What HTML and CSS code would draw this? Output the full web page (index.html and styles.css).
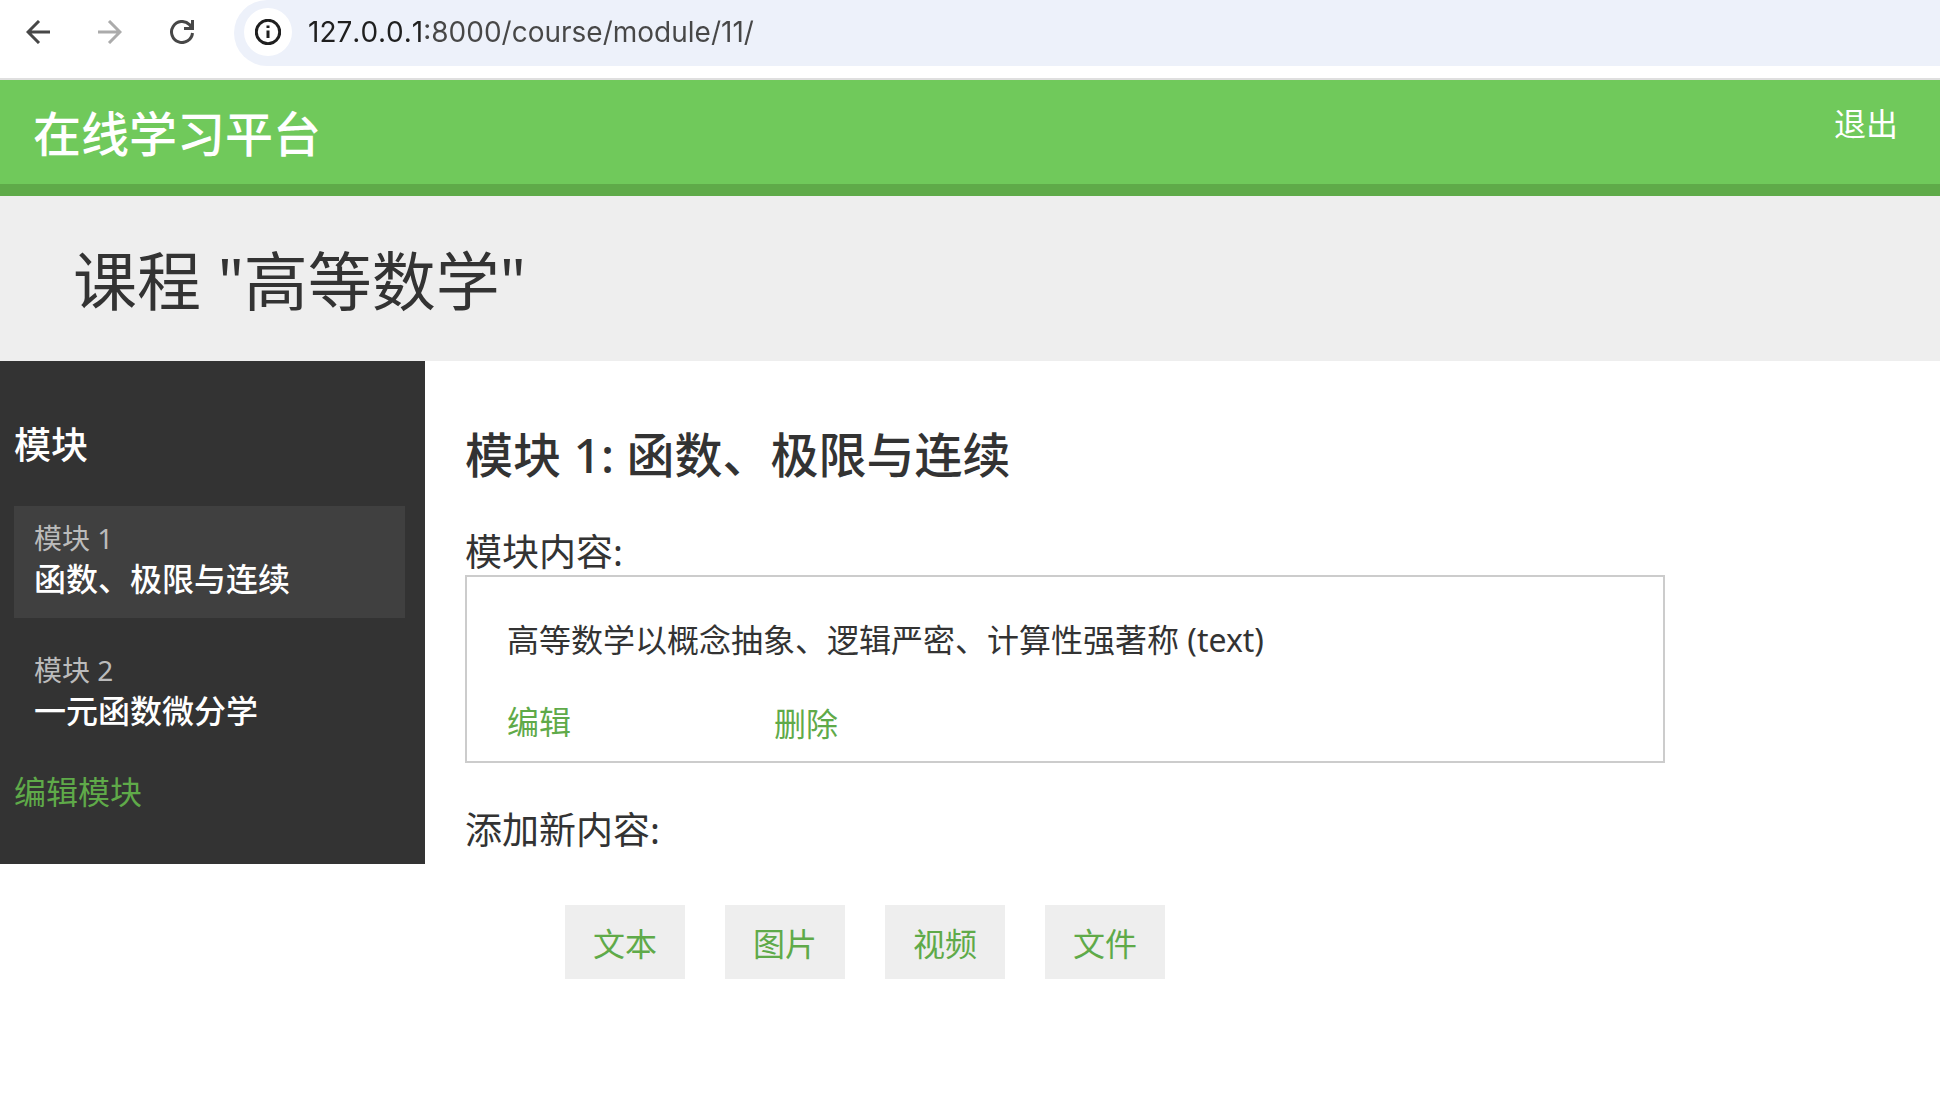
FILE: index.html
```html
<!DOCTYPE html>
<html lang="zh-CN">
<head>
<meta charset="utf-8">
<meta name="viewport" content="width=device-width, initial-scale=1">
<title>课程 "高等数学"</title>
<link rel="stylesheet" href="styles.css">
</head>
<body>
<div class="toolbar">
  <button class="nav-button" type="button" aria-label="后退">
    <svg viewBox="0 0 24 24" width="24" height="24"><path d="M24 12H2M13 1 2 12l11 11"/></svg>
  </button>
  <button class="nav-button nav-button-off" type="button" aria-label="前进" disabled>
    <svg viewBox="0 0 24 24" width="24" height="24"><path d="M0 12h22M11 1l11 11-11 11"/></svg>
  </button>
  <button class="nav-button" type="button" aria-label="重新加载">
    <svg viewBox="0 0 24 24" width="24" height="24"><path d="M22.500 13A10.500 10.500 0 1 1 19.500 4.600L22 8M22.500 0v8.500H14"/></svg>
  </button>
  <div class="address">
    <button class="site-info" type="button" aria-label="网站信息">
      <svg viewBox="0 0 26 26" width="26" height="26"><circle cx="13" cy="13" r="11.700"/><path d="M13 11.500V19M13 6.500v2.500"/></svg>
    </button>
    <input class="url" type="text" aria-label="地址" value="127.0.0.1:8000/course/module/11/">
  </div>
</div>

<header class="header">
  <a class="logo" href="#">在线学习平台</a>
  <a class="logout" href="#">退出</a>
</header>

<h1 class="course-title">课程 "高等数学"</h1>

<div class="layout">
  <nav class="sidebar">
    <h3 class="section-title">模块</h3>
    <ul class="modules">
      <li><a class="module module-selected" href="#"><span class="module-label">模块 1</span><span class="module-name">函数、极限与连续</span></a></li>
      <li><a class="module" href="#"><span class="module-label">模块 2</span><span class="module-name">一元函数微分学</span></a></li>
    </ul>
    <a class="action" href="#">编辑模块</a>
  </nav>

  <main class="main">
    <h2 class="module-title">模块 1: 函数、极限与连续</h2>
    <h3 class="section-title">模块内容:</h3>
    <div class="content-item">
      <p class="content-text">高等数学以概念抽象、逻辑严密、计算性强著称 (text)</p>
      <div class="content-actions">
        <a class="action" href="#">编辑</a>
        <button class="action delete" type="button">删除</button>
      </div>
    </div>
    <h3 class="section-title add-title">添加新内容:</h3>
    <ul class="content-types">
      <li><a class="type" href="#">文本</a></li>
      <li><a class="type" href="#">图片</a></li>
      <li><a class="type" href="#">视频</a></li>
      <li><a class="type" href="#">文件</a></li>
    </ul>
  </main>
</div>
</body>
</html>
```

FILE: styles.css
```css
* {
  box-sizing: border-box;
}

body {
  margin: 0;
  background: #fff;
  color: #333;
  font-family: "Noto Sans", "Noto Sans CJK SC", sans-serif;
  font-size: 32px;
  line-height: 44px;
}

h1, h2, h3, p, ul {
  margin: 0;
  padding: 0;
  font-weight: 400;
}

ul {
  list-style: none;
}

a {
  text-decoration: none;
}

button {
  padding: 0;
  border: 0;
  background: none;
  font: inherit;
  cursor: pointer;
}

svg {
  display: block;
  fill: none;
  stroke: currentColor;
  stroke-width: 3;
}

/* Browser toolbar */
.toolbar {
  display: flex;
  align-items: flex-start;
  gap: 48px;
  padding: 0 0 12px 26px;
  border-bottom: 2px solid #dfdfdf;
}

.nav-button {
  padding-top: 20px;
  color: #474747;
}

.nav-button-off {
  color: #ababab;
}

.address {
  display: flex;
  flex: 1;
  align-items: center;
  gap: 16px;
  margin-left: -8px;
  padding: 8px 0 10px 10px;
  border-radius: 33px 0 0 33px;
  background: #edf1fa;
}

.site-info {
  display: grid;
  place-items: center;
  width: 48px;
  height: 48px;
  border-radius: 50%;
  background: #fff;
  color: #1f1f1f;
}

.url {
  flex: 1;
  min-width: 0;
  height: 48px;
  padding: 0;
  border: 0;
  outline: 0;
  background: linear-gradient(to right, #1f1f1f 118px, #474747 118px);
  background-clip: text;
  -webkit-background-clip: text;
  color: transparent;
  font-family: Inter, sans-serif;
  font-size: 28px;
  font-kerning: none;
}

/* Site header */
.header {
  display: flex;
  align-items: flex-start;
  justify-content: space-between;
  padding: 22px 42px 18px 33px;
  border-bottom: 12px solid #5faa49;
  background: #70c95b;
}

.logo {
  color: #fff;
  font-size: 48px;
  font-weight: 500;
  line-height: 64px;
}

.logout {
  color: #fff;
}

.course-title {
  padding: 40px 73px 35px;
  background: #eee;
  font-size: 64px;
  line-height: 90px;
}

.layout {
  display: flex;
  align-items: flex-start;
}

.section-title {
  font-size: 37px;
  line-height: 46px;
}

.action {
  color: #5faa49;
}

/* Module list */
.sidebar {
  flex: 0 0 425px;
  padding: 61px 20px 50px 14px;
  background: #333;
  color: #fff;
}

.sidebar .section-title {
  font-weight: 500;
}

.modules {
  display: grid;
  gap: 20px;
  margin: 38px 0 20px;
}

.module {
  display: block;
  padding: 13px 20px 17px;
  color: #fff;
}

.module-selected {
  background: #404040;
}

.module-label,
.module-name {
  display: block;
}

.module-label {
  color: #bbb;
  font-size: 28px;
  line-height: 38px;
}

.module-name {
  font-weight: 500;
}

.sidebar .action {
  display: block;
}

/* Module contents */
.main {
  flex: 1;
  min-width: 0;
  padding: 62px 40px 40px;
}

.module-title {
  margin-bottom: 42px;
  font-size: 48px;
  font-weight: 500;
  line-height: 64px;
}

.content-item {
  max-width: 1200px;
  padding: 41px 40px 13px;
  border: 2px solid #ccc;
}

.content-actions {
  display: flex;
  align-items: flex-start;
  gap: 203px;
  margin-top: 38px;
}

.delete {
  line-height: 48px;
}

.add-title {
  margin-top: 44px;
}

.content-types {
  display: flex;
  flex-wrap: wrap;
  gap: 40px;
  margin-top: 52px;
  padding-left: 100px;
}

.type {
  display: block;
  padding: 17px 28px 13px;
  background: #eee;
  color: #5faa49;
}
```
